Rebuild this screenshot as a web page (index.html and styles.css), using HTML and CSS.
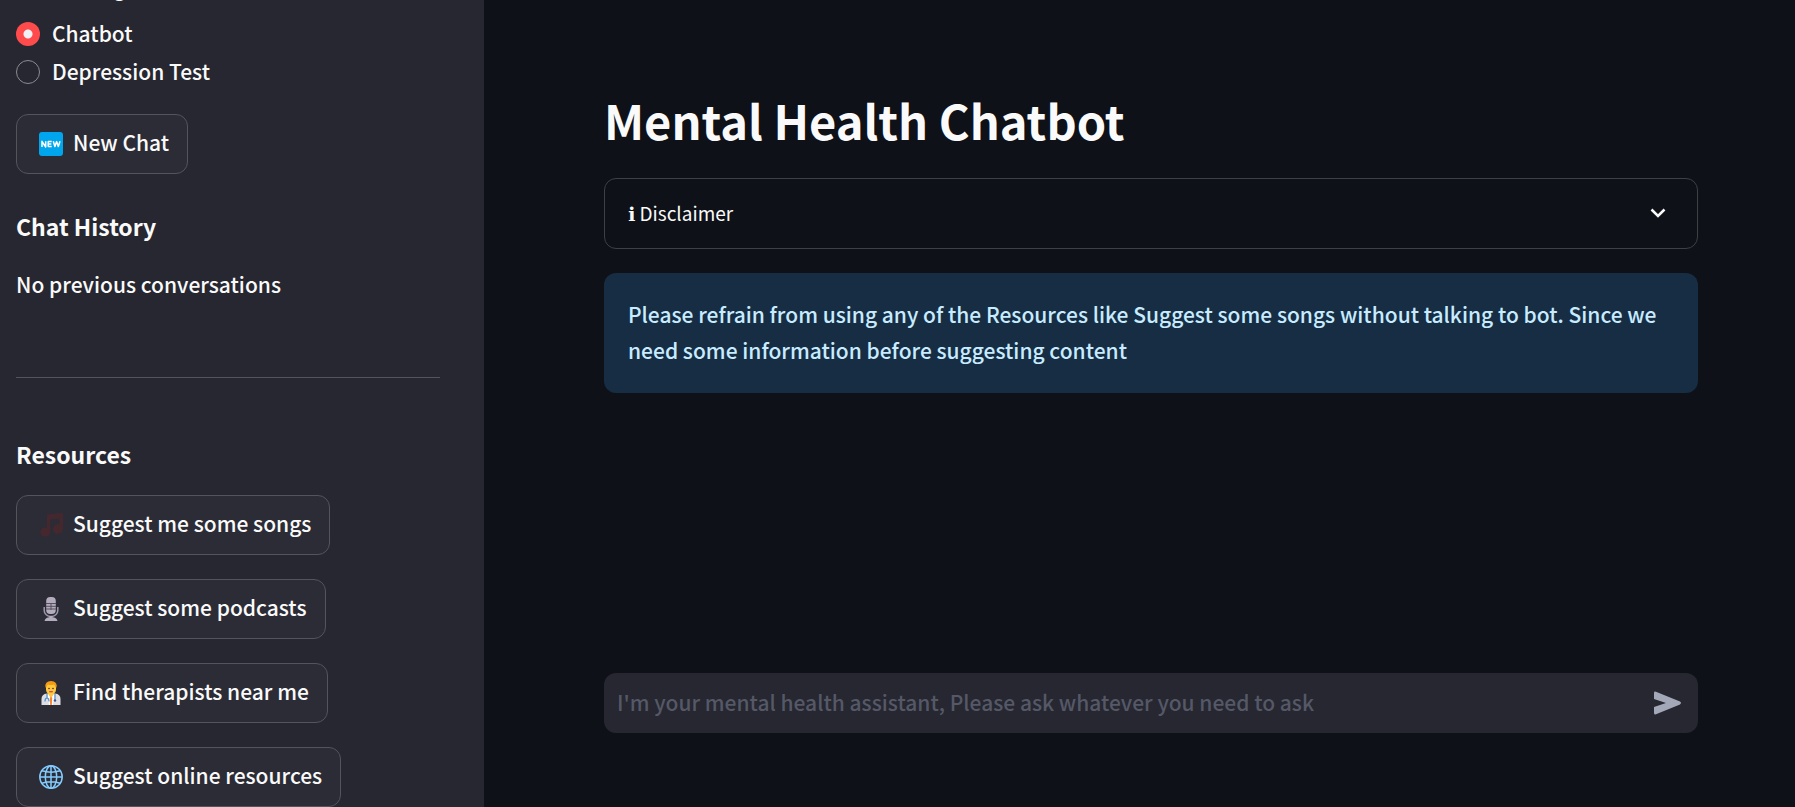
FILE: index.html
```html
<!DOCTYPE html>
<html lang="en">
<head>
<meta charset="utf-8">
<title>Mental Health Chatbot</title>
<link rel="stylesheet" href="styles.css">
</head>
<body>
<aside class="sidebar">
  <fieldset class="nav">
    <legend class="nav-title">Select a Page</legend>
    <label class="option"><input class="radio" type="radio" name="page" checked><span class="option-label">Chatbot</span></label>
    <label class="option"><input class="radio" type="radio" name="page"><span class="option-label">Depression Test</span></label>
  </fieldset>

  <button class="btn" type="button">
    <svg class="icon" viewBox="0 0 24 24" aria-hidden="true">
      <rect width="24" height="24" rx="3" fill="#00a6ed"/>
      <path d="M3 15V9.300L6.700 15V9.300M9.200 9.300V14.700M9.200 9.600H12.700M9.200 12H12.300M9.200 14.600H12.700M14.300 9.300L15.900 14.600L17.600 9.600L19.300 14.600L21 9.300" fill="none" stroke="#fff" stroke-width="1.500" stroke-linejoin="round"/>
    </svg>
    <span class="label">New Chat</span>
  </button>

  <section class="history">
    <h2 class="heading">Chat History</h2>
    <p class="note">No previous conversations</p>
  </section>

  <hr class="rule">

  <section class="resources">
    <h2 class="heading">Resources</h2>
    <button class="btn" type="button">
      <svg class="icon" viewBox="0 0 24 24" aria-hidden="true" fill="#45272e">
        <path d="M8 2.500Q8 1.300 9.300 1.200L22.500 0Q24 0 24 1.300V16H20.600V5.500L11.300 6.500V19H8Z"/>
        <circle cx="6.200" cy="19.100" r="4.900"/><circle cx="18.900" cy="16" r="4.900"/>
      </svg>
      <span class="label">Suggest me some songs</span>
    </button>
    <button class="btn" type="button">
      <svg class="icon" viewBox="0 0 24 24" aria-hidden="true">
        <path d="M5.200 10V13.500A6.800 6 0 0 0 18.800 13.500V10" fill="none" stroke="#a096ab" stroke-width="1.500"/>
        <rect x="7.200" y="0" width="9.600" height="17" rx="4" fill="#b4acbc"/>
        <path d="M7 6.500H17M7 9.300H17M7 12H17M12 6V13" stroke="#55505f" stroke-width="1"/>
        <path d="M10.500 19H13.500V20.300Q17.500 20.300 18.500 24H5.500Q6.500 20.300 10.500 20.300Z" fill="#b4acbc"/>
      </svg>
      <span class="label">Suggest some podcasts</span>
    </button>
    <button class="btn" type="button">
      <svg class="icon" viewBox="0 0 24 24" aria-hidden="true">
        <path d="M2.500 24V18Q2.500 13 8 12.500H16Q21.500 13 21.500 18V24Z" fill="#dfdde3"/>
        <path d="M9 11H15L14 16L12 20L10 16Z" fill="#ffc83d"/>
        <path d="M8.500 12.500L12 17L15.500 12.500L14 24H10Z" fill="#fff"/>
        <path d="M12 15.500L13.200 17L12.800 24H11.200L10.800 17Z" fill="#ff822d"/>
        <path d="M8 13V17M8 17Q6 17 6 20.500M8 17Q10 17 10 20.500M16 13V19" fill="none" stroke="#5092cf" stroke-width="1.200"/>
        <circle cx="16" cy="19.500" r="1.200" fill="#46528c"/>
        <rect x="7" y="1" width="10" height="12.500" rx="4.800" fill="#ffc83d"/>
        <path d="M6.500 6.500Q5.500 0 12 0Q18.500 0 17.500 6.500H16.800Q16.500 4 14.500 3.500Q12 4.500 9 3.500Q7.500 4.500 7.200 6.500Z" fill="#f59b13"/>
        <circle cx="10" cy="7.500" r=".8" fill="#402a32"/><circle cx="14" cy="7.500" r=".8" fill="#402a32"/>
        <path d="M10.200 10.700H13.800" stroke="#d33b54" stroke-width="1.200"/>
      </svg>
      <span class="label">Find therapists near me</span>
    </button>
    <button class="btn" type="button">
      <svg class="icon" viewBox="0 0 24 24" aria-hidden="true" fill="none" stroke="#83cbff" stroke-width="1.500">
        <circle cx="12" cy="12" r="11.200"/><ellipse cx="12" cy="12" rx="5.700" ry="11.200"/>
        <path d="M12 1V23M1 12H23M3 5.800Q12 8.500 21 5.800M3 18.200Q12 15.500 21 18.200"/>
      </svg>
      <span class="label">Suggest online resources</span>
    </button>
  </section>
</aside>

<main class="main">
  <h1 class="title">Mental Health Chatbot</h1>
  <details class="expander">
    <summary class="summary">
      <span class="summary-text"><span class="info-mark">ℹ</span> Disclaimer</span>
      <svg class="chevron" viewBox="0 0 24 24" aria-hidden="true"><path d="M5.500 7.500L12 14L18.500 7.500" fill="none" stroke="#fafafa" stroke-width="2.500"/></svg>
    </summary>
  </details>
  <p class="alert">Please refrain from using any of the Resources like Suggest some songs without talking to bot. Since we need some information before suggesting content</p>
  <form class="chat">
    <input class="chat-input" type="text" aria-label="Message" placeholder="I'm your mental health assistant, Please ask whatever you need to ask">
    <button class="send" type="button" aria-label="Send message">
      <svg class="send-icon" viewBox="0 0 28 24" aria-hidden="true"><path d="M0 8V2Q0 0 2 .8L26 10.600Q28 12 26 13.400L2 23.200Q0 24 0 22V16L12 12Z" fill="#a3a8b8"/></svg>
    </button>
  </form>
</main>
</body>
</html>
```

FILE: styles.css
```css
* {
  box-sizing: border-box;
}

body {
  margin: 0;
  height: 100vh;
  display: flex;
  overflow: hidden;
  background: #0e1117;
  color: #fafafa;
  font-family: "Noto Sans CJK SC", "Noto Sans", sans-serif;
  font-size: 21px;
  font-weight: 500;
  line-height: 36px;
}

button,
input {
  font: inherit;
  color: inherit;
}

.sidebar {
  flex: 0 0 484px;
  display: flex;
  flex-direction: column;
  justify-content: flex-end;
  align-items: flex-start;
  padding: 0 44px 0 16px;
  background: #262730;
}

.nav {
  display: flex;
  flex-direction: column;
  gap: 2px;
  margin: 0 0 24px;
  padding: 0;
  border: 0;
}

.nav-title {
  padding: 0 0 16px;
  font-size: 19px;
  line-height: 24px;
}

.option {
  display: flex;
  align-items: center;
  height: 36px;
  gap: 12px;
}

.label {
  padding-bottom: 4px;
}

.option-label {
  padding-bottom: 2px;
}

.radio {
  appearance: none;
  width: 24px;
  height: 24px;
  margin: 0;
  border: 1px solid #8b8c92;
  border-radius: 50%;
}

.radio:checked {
  border: 0;
  background: radial-gradient(circle, #f0f2f6 4px, #ff4b4b 5px);
}

.btn {
  flex: none;
  height: 60px;
  display: flex;
  align-items: center;
  gap: 10px;
  padding: 0 18px 0 22px;
  border: 1px solid #53545c;
  border-radius: 12px;
  background: #2b2c36;
}

.icon {
  width: 24px;
  height: 24px;
  flex: none;
}

.heading {
  margin: 0;
  font-size: 23px;
  line-height: 34px;
  font-weight: 700;
}

.history {
  padding-top: 35px;
}

.note {
  margin: 23px 0 0;
}

.rule {
  width: 100%;
  margin: 75px 0 59px;
  border: 0;
  border-top: 1px solid #52535b;
}

.resources {
  display: flex;
  flex-direction: column;
  align-items: flex-start;
  gap: 24px;
}

.main {
  flex: 1;
  display: flex;
  flex-direction: column;
  padding: 84px 97px 74px 120px;
}

.title {
  margin: 0;
  font-size: 47px;
  line-height: 72px;
  font-weight: 700;
}

.expander {
  margin-top: 22px;
  border: 1px solid #3d4045;
  border-radius: 12px;
}

.summary {
  display: flex;
  align-items: center;
  justify-content: space-between;
  padding: 16px 27px 16px 23px;
  font-size: 19px;
  font-weight: 400;
  list-style: none;
}

.info-mark {
  font-family: "DejaVu Sans", sans-serif;
}

.chevron {
  width: 24px;
  height: 24px;
}

.alert {
  margin: 24px 0 0;
  padding: 23px 24px 25px;
  border-radius: 12px;
  background: #172d43;
  color: #c7ebff;
}

.chat {
  display: flex;
  align-items: center;
  height: 60px;
  margin-top: auto;
  padding: 0 16px 0 13px;
  border-radius: 12px;
  background: #262730;
}

.chat-input {
  flex: 1;
  min-width: 0;
  padding: 0 0 3px;
  border: 0;
  outline: 0;
  background: none;
}

.chat-input::placeholder {
  color: #555867;
  opacity: 1;
}

.send {
  display: flex;
  padding: 0;
  border: 0;
  background: none;
}

.send-icon {
  width: 28px;
  height: 24px;
}
```
